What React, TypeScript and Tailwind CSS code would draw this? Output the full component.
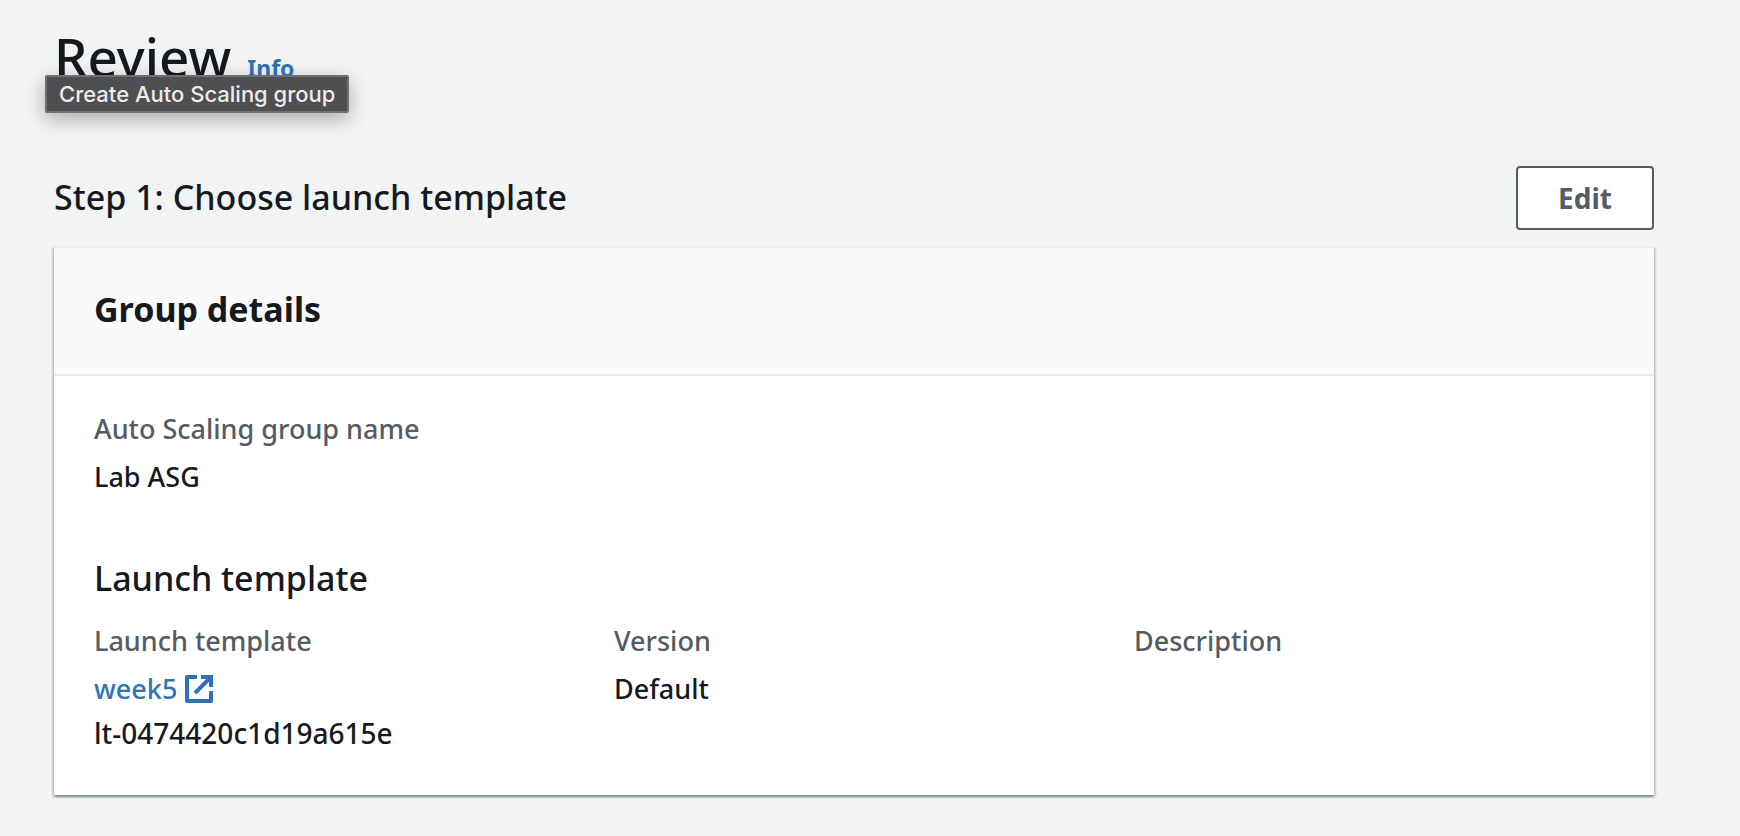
import type { ReactNode } from "react";

function ExternalIcon() {
  return (
    <svg
      viewBox="0 0 28 28"
      className="size-7 shrink-0"
      fill="none"
      stroke="currentColor"
      strokeWidth="4"
      aria-hidden="true"
    >
      <path d="M12 2H2v24h24V16" strokeLinejoin="round" />
      <path d="M16 2h10v10M25 3 10 18" />
    </svg>
  );
}

function Field({ label, children }: { label: string; children?: ReactNode }) {
  return (
    <div className="flex flex-col gap-1">
      <dt className="text-[#545b64]">{label}</dt>
      <dd>{children}</dd>
    </div>
  );
}

export default function App() {
  return (
    <main className="min-h-screen bg-[#f2f3f3] pt-5 pr-[86px] pb-8 pl-[54px] font-['Noto_Sans',sans-serif] text-[27px] leading-[44px] font-medium text-[#16191f]">
      <div className="relative flex items-baseline gap-4">
        <h1 className="text-[53px] leading-[74px]">Review</h1>
        <a href="#info" className="text-[23px] font-bold text-[#2e73b8]">
          Info
        </a>
        <div
          role="tooltip"
          className="absolute top-[55px] -left-[9px] rounded-xs border-2 border-[#6f7071] bg-[#4e4f50] px-3 py-1 font-['Inter',sans-serif] text-[22px] leading-[26px] whitespace-nowrap text-[#ececec] shadow-[0_6px_20px_rgba(0,0,0,0.3)]"
        >
          Create Auto Scaling group
        </div>
      </div>

      <section className="mt-[72px]">
        <div className="flex items-center justify-between">
          <h2 className="pb-0.5 text-[34px]">Step 1: Choose launch template</h2>
          <button
            type="button"
            className="rounded border-2 border-[#545b64] bg-white px-10 py-2 text-[28px] font-bold text-[#545b64]"
          >
            Edit
          </button>
        </div>

        <div className="mt-4 border-t-2 border-[#eaeded] bg-white shadow-[0_2px_2px_rgba(0,28,36,0.3),2px_2px_2px_rgba(0,28,36,0.15),-2px_2px_2px_rgba(0,28,36,0.15)]">
          <header className="border-b-2 border-[#eaeded] bg-[#fafafa] px-10 pt-[38px] pb-[42px]">
            <h3 className="text-[34px] leading-[46px] font-bold">Group details</h3>
          </header>
          <div className="px-10 pt-[31px] pb-10">
            <dl>
              <Field label="Auto Scaling group name">Lab ASG</Field>
            </dl>
            <h4 className="mt-[57px] text-[34px]">Launch template</h4>
            <dl className="mt-[19px] grid grid-cols-3 gap-10">
              <Field label="Launch template">
                <a href="#week5" className="flex w-fit items-center gap-2 text-[#2e73b8]">
                  week5
                  <ExternalIcon />
                </a>
                <span className="block text-[28px]">lt-0474420c1d19a615e</span>
              </Field>
              <Field label="Version">Default</Field>
              <Field label="Description" />
            </dl>
          </div>
        </div>
      </section>
    </main>
  );
}
